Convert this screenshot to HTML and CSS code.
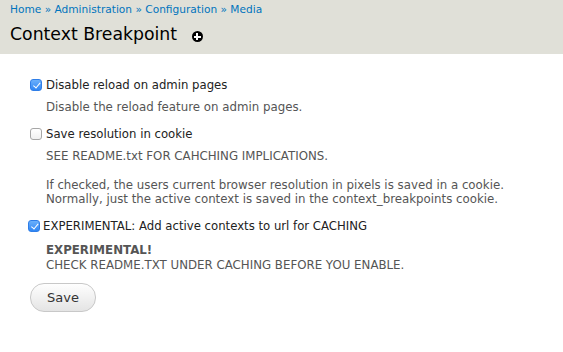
FILE: index.html
```html
<!DOCTYPE html>
<html>
  <head>
    <title>Context Breakpoint</title>
    <meta charset="utf-8">
    <link rel="stylesheet" href="styles.css">
  </head>
  <body>
    <div id="branding">
      <div class="breadcrumb">
        <a href="#">Home</a> » <a href="#">Administration</a> » <a href="#">Configuration</a> » <a href="#">Media</a>
      </div>
      <h1 class="page-title">Context Breakpoint <span class="add-or-remove" title="Add to shortcuts"></span></h1>
    </div>

    <form id="page" class="settings-form">
      <div class="form-item">
        <label class="option"><input type="checkbox" checked> Disable reload on admin pages</label>
        <div class="description">Disable the reload feature on admin pages.</div>
      </div>

      <div class="form-item">
        <label class="option"><input type="checkbox"> Save resolution in cookie</label>
        <div class="description">
          SEE README.txt FOR CAHCHING IMPLICATIONS.<br><br>
          If checked, the users current browser resolution in pixels is saved in a cookie.<br>
          Normally, just the active context is saved in the context_breakpoints cookie.
        </div>
      </div>

      <div class="form-item experimental">
        <label class="option"><input type="checkbox" checked> EXPERIMENTAL: Add active contexts to url for CACHING</label>
        <div class="description">
          <strong>EXPERIMENTAL!</strong><br>
          CHECK README.TXT UNDER CACHING BEFORE YOU ENABLE.
        </div>
      </div>

      <div class="form-actions">
        <input type="submit" class="form-submit" value="Save">
      </div>
    </form>
  </body>
</html>
```

FILE: styles.css
```css
html {
  height: 100%;
}

body {
  margin: 0;
  background: #fff;
  color: #333;
  font-family: "DejaVu Sans", Verdana, sans-serif;
  font-size: 13px;
}

a {
  color: #0074bd;
  text-decoration: none;
}

#branding {
  height: 54px;
  box-sizing: border-box;
  padding: 2px 10px 0;
  background: #e0e0d8;
}

.breadcrumb {
  font-size: 10.6px;
  line-height: 14px;
  color: #0074bd;
}

.page-title {
  margin: 6px 0 0;
  font-size: 17.3px;
  font-weight: normal;
  line-height: 24px;
  color: #000;
}

/* shortcut star, drawn as a black circle with a white plus */
.add-or-remove {
  display: inline-block;
  position: relative;
  width: 11px;
  height: 11px;
  margin-left: 9px;
  border-radius: 50%;
  background: #000;
  vertical-align: -2px;
}
.add-or-remove::before,
.add-or-remove::after {
  content: "";
  position: absolute;
  background: #fff;
}
.add-or-remove::before {
  left: 2px;
  top: 4.5px;
  width: 7px;
  height: 2px;
}
.add-or-remove::after {
  left: 4.5px;
  top: 2px;
  width: 2px;
  height: 7px;
}

.settings-form {
  padding: 22px 30px 0;
}

.form-item {
  margin-bottom: 11px;
}

label.option {
  display: flex;
  align-items: center;
  line-height: 18px;
  font-size: 11.7px;
  color: #222;
}

input[type=checkbox] {
  -webkit-appearance: none;
  appearance: none;
  position: relative;
  flex: none;
  width: 12px;
  height: 12px;
  margin: 0 4px 0 0;
  box-sizing: border-box;
  border: 1px solid #a6a6a6;
  border-radius: 3px;
  background: linear-gradient(#fff, #f0f0f0);
}

input[type=checkbox]:checked {
  border-color: #2f7ee8;
  background: linear-gradient(#6bb0fb, #2f86f4);
}

input[type=checkbox]:checked::after {
  content: "";
  position: absolute;
  left: 3.5px;
  top: 1px;
  width: 2.5px;
  height: 5.5px;
  border: solid #fff;
  border-width: 0 1.5px 1.5px 0;
  transform: rotate(40deg);
}

.experimental label.option {
  margin-left: -2px;
}
.experimental input[type=checkbox] {
  margin-right: 3px;
}

.description {
  margin: 6px 0 0 16px;
  font-size: 11.8px;
  line-height: 14.3px;
  color: #555;
}

.experimental .description {
  margin-top: 8px;
}

.form-actions {
  margin-top: 11px;
}

.form-submit {
  width: 66px;
  height: 29px;
  padding: 0;
  border: 1px solid #c8c8c8;
  border-radius: 14px;
  background: linear-gradient(#fefefe, #e4e4e4);
  color: #333;
  font-family: inherit;
  font-size: 13px;
  cursor: pointer;
}
```
